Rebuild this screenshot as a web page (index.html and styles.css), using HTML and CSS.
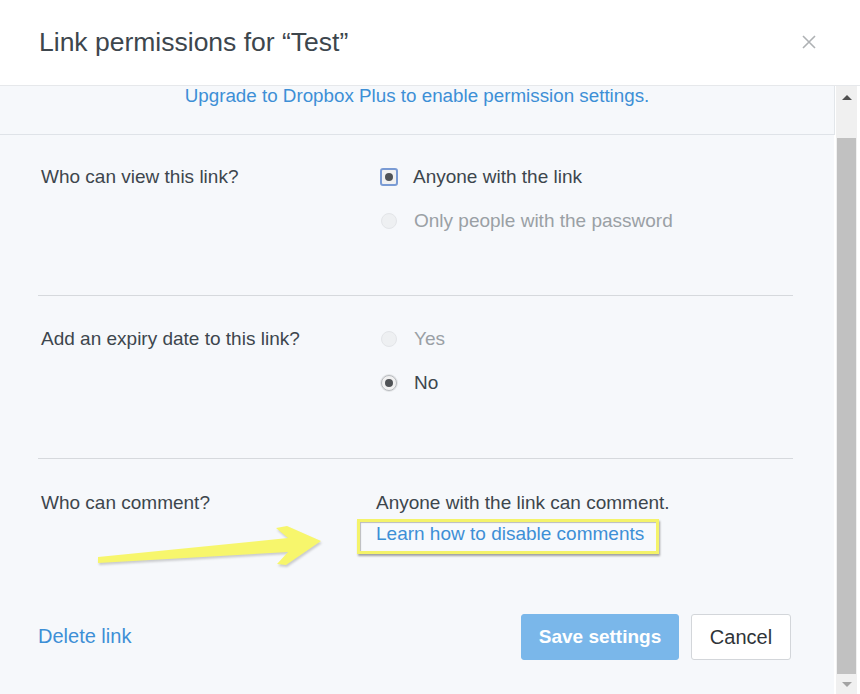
FILE: index.html
```html
<!DOCTYPE html>
<html lang="en">
<head>
<meta charset="utf-8">
<title>Link permissions</title>
<link rel="stylesheet" href="styles.css">
</head>
<body>
<div class="dialog">
  <header class="head">
    <h1 class="title">Link permissions for “Test”</h1>
    <span class="close" aria-label="Close">
      <svg width="14" height="14" viewBox="0 0 14 14"><path d="M1 1L13 13M13 1L1 13" stroke="#aeb1b4" stroke-width="1.6" fill="none"/></svg>
    </span>
  </header>
  <div class="body">
    <div class="scroll-area">
      <div class="banner"><a class="link">Upgrade to Dropbox Plus to enable permission settings.</a></div>

      <section class="section first">
        <div class="label">Who can view this link?</div>
        <div class="options">
          <div class="opt"><span class="radio checked focused"></span><span>Anyone with the link</span></div>
          <div class="opt disabled"><span class="radio"></span><span>Only people with the password</span></div>
        </div>
      </section>

      <section class="section second">
        <div class="label">Add an expiry date to this link?</div>
        <div class="options">
          <div class="opt disabled"><span class="radio"></span><span>Yes</span></div>
          <div class="opt"><span class="radio checked"></span><span>No</span></div>
        </div>
      </section>

      <section class="section last">
        <div class="label">Who can comment?</div>
        <div class="options plain">
          <div class="note">Anyone with the link can comment.</div>
          <div class="highlight"><a class="link">Learn how to disable comments</a></div>
        </div>
        <svg class="arrow" width="250" height="60" viewBox="0 0 250 60">
          <polygon points="8,43 198,24 186,14 197,12 231,27 196,51 187,50 198,38 8,49" fill="#f7f66c"/>
        </svg>
      </section>

      <footer class="foot">
        <a class="link delete">Delete link</a>
        <div class="buttons">
          <button class="btn primary">Save settings</button>
          <button class="btn secondary">Cancel</button>
        </div>
      </footer>
    </div>
    <div class="scrollbar">
      <div class="sb-arrow up"></div>
      <div class="sb-track"><div class="sb-thumb"></div></div>
      <div class="sb-arrow down"></div>
    </div>
  </div>
</div>
</body>
</html>
```
FILE: styles.css
```css
* { box-sizing: border-box; }
html, body { margin: 0; padding: 0; }
body {
  width: 860px;
  height: 694px;
  overflow: hidden;
  font-family: "Liberation Sans", Arial, sans-serif;
  color: #3d464d;
  background: #fff;
}
.dialog {
  display: flex;
  flex-direction: column;
  height: 694px;
}
.head {
  height: 86px;
  flex: none;
  display: flex;
  align-items: center;
  justify-content: space-between;
  padding: 0 44px 0 39px;
  background: #fff;
  border-bottom: 1px solid #e6e8eb;
}
.title {
  margin: 0;
  margin-top: -1px;
  font-weight: normal;
  font-size: 26.5px;
  color: #3d464d;
}
.close { display: flex; margin-top: -2px; }
.body {
  flex: 1;
  display: flex;
  min-height: 0;
}
.scroll-area {
  flex: 1;
  background: #f6f8fb;
  position: relative;
  border-right: 2px solid #ffffff;
}
.link {
  color: #3d8fd6;
  text-decoration: none;
  cursor: pointer;
}
.banner {
  height: 49px;
  text-align: center;
  font-size: 18.8px;
  line-height: 20px;
  padding-top: 0;
  border-bottom: 1px solid #dfe3e8;
  border-right: 1px solid #e2e6ea;
  margin-right: -1px;
}
.section {
  display: flex;
  margin: 0 41px 0 38px;
  padding: 32px 0 64px 3px;
  border-bottom: 1px solid #d6d9dd;
  font-size: 19px;
  line-height: 20px;
}
.section.second { padding-top: 33px; padding-bottom: 65px; }
.section.last {
  border-bottom: none;
  padding: 34px 0 0 3px;
  position: relative;
  height: 144px;
}
.label {
  width: 335px;
  flex: none;
  color: #3d464d;
}
.options {
  display: flex;
  flex-direction: column;
  gap: 24px;
}
.opt {
  display: flex;
  align-items: center;
  gap: 17px;
}
.opt.disabled { color: #9aa0a5; }
.radio {
  width: 16px;
  height: 16px;
  margin-left: 5px;
  border-radius: 50%;
  border: 1px solid #e3e5e8;
  background: #eef0f2;
  display: inline-flex;
  align-items: center;
  justify-content: center;
  flex: none;
}
.radio.checked {
  background: #f1f1f1;
  border-color: #b9bcc0;
  box-shadow: 0 0 0 1px #e4e6e8;
}
.radio.checked::after {
  content: "";
  width: 8px;
  height: 8px;
  border-radius: 50%;
  background: #505356;
}
.radio.focused {
  border-radius: 3px;
  width: 18px;
  height: 18px;
  margin-left: 4px;
  margin-right: -2px;
  border: 2px solid #7a9bd4;
  box-shadow: none;
}
.options.plain {
  gap: 0;
  margin-left: 0;
}
.note { line-height: 20px; }
.highlight {
  margin: 6px 0 0 -19px;
  width: 302px;
  height: 35px;
  border: 3px solid #f4f36a;
  box-shadow: 1px 2px 2px rgba(0, 0, 0, 0.35), inset 1px 1px 1px rgba(0, 0, 0, 0.25);
  padding: 2px 0 0 16px;
  line-height: 20px;
  background: #f7f9fc;
}
.arrow {
  position: absolute;
  left: 52px;
  top: 55px;
  filter: drop-shadow(1px 2px 1px rgba(0, 0, 0, 0.18));
}
.foot {
  display: flex;
  align-items: center;
  justify-content: space-between;
  margin: 11px 43px 0 38px;
}
.delete {
  font-size: 20px;
  margin-top: -2px;
}
.buttons {
  display: flex;
  gap: 12px;
}
.btn {
  height: 46px;
  border-radius: 3px;
  font-family: "Liberation Sans", Arial, sans-serif;
  font-size: 20px;
  border: 1px solid #d3d6da;
  background: #fff;
  color: #2f3438;
  padding: 0;
  white-space: nowrap;
}
.btn.primary {
  width: 158px;
  background: #7ab7ea;
  border-color: #7ab7ea;
  color: #fff;
  font-weight: bold;
  font-size: 19px;
}
.btn.secondary { width: 100px; }
.scrollbar {
  width: 24px;
  flex: none;
  display: flex;
  flex-direction: column;
  background: #f0f0f0;
  border-right: 3px solid #fff;
}
.sb-arrow {
  height: 20px;
  flex: none;
  display: flex;
  align-items: center;
  justify-content: center;
}
.sb-arrow.up { height: 50px; align-items: flex-start; padding-top: 9px; }
.sb-arrow.up::after {
  content: "";
  border-left: 5px solid transparent;
  border-right: 5px solid transparent;
  border-bottom: 5px solid #505050;
}
.sb-arrow.down::after {
  content: "";
  border-left: 5px solid transparent;
  border-right: 5px solid transparent;
  border-top: 5px solid #a3a3a3;
}
.sb-track {
  flex: 1;
  display: flex;
  padding: 2px 1px 0 1px;
}
.sb-thumb {
  flex: 1;
  background: #c1c1c1;
}
```
